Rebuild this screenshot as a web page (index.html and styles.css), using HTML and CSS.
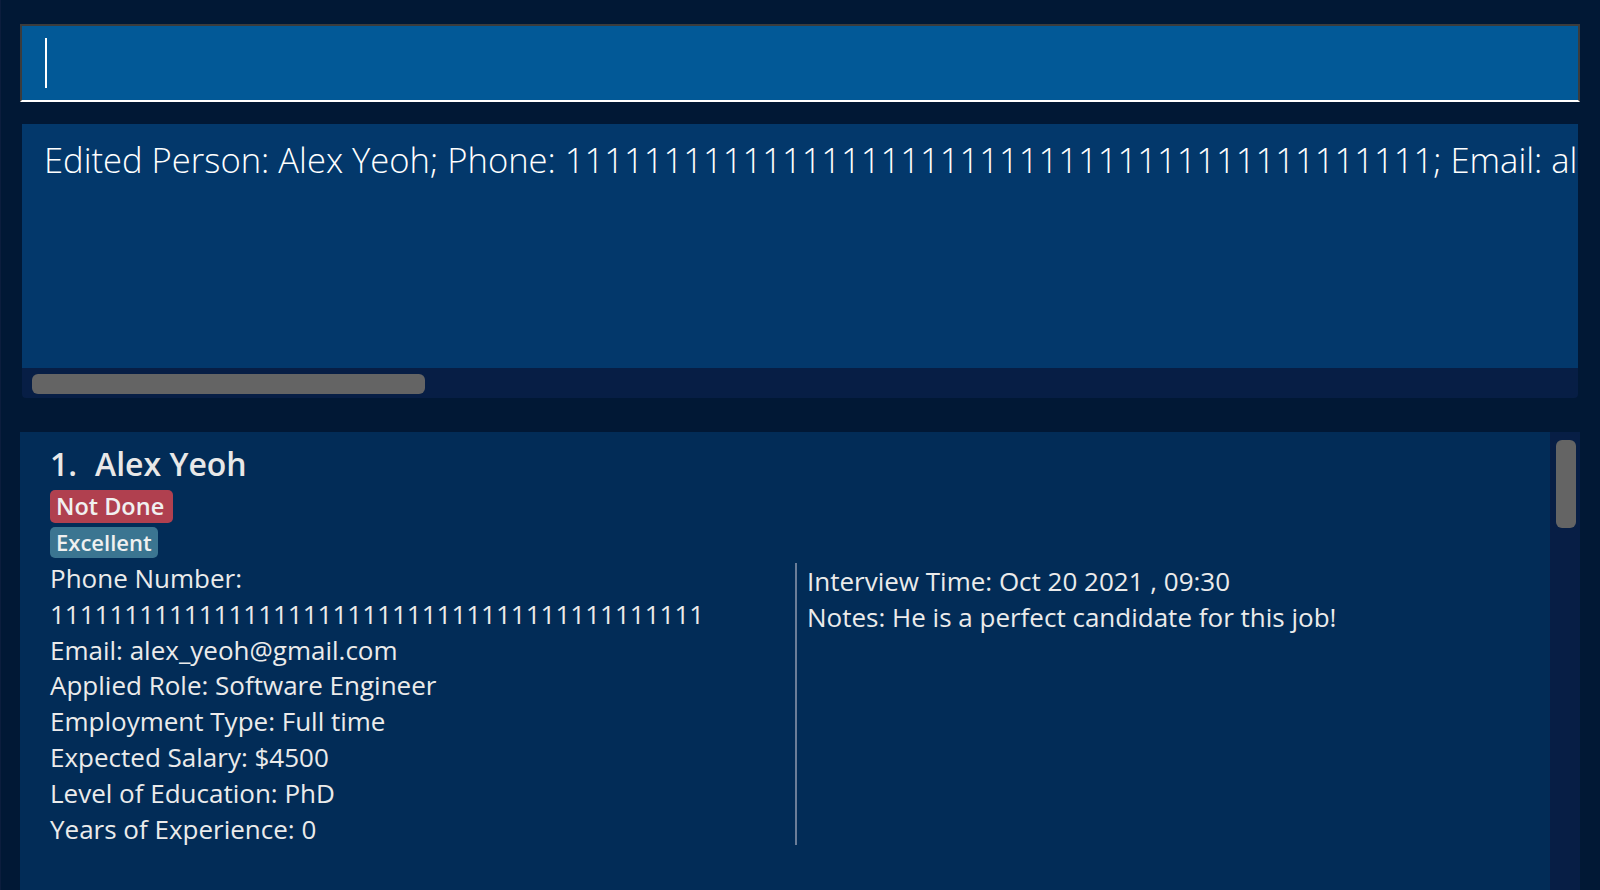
FILE: index.html
```html
<!DOCTYPE html>
<html lang="en">
<head>
<meta charset="utf-8">
<title>Address Book</title>
<link rel="stylesheet" href="styles.css">
</head>
<body>
<div class="app">
  <div class="command">
    <span class="caret"></span>
  </div>
  <div class="result">
    <div class="result-text">Edited Person: Alex Yeoh; Phone: 11111111111111111111111111111111111111111111; Email: alex_yeoh@gmail.com; Applied Role: Software Engineer; Employment Type: Full time</div>
    <div class="hscroll"><div class="hthumb"></div></div>
  </div>
  <div class="list">
    <div class="card">
      <div class="title"><span class="idx">1.</span><span class="name">Alex Yeoh</span></div>
      <div class="tags">
        <span class="tag tag-red">Not Done</span>
        <span class="tag tag-teal">Excellent</span>
      </div>
      <div class="details">
        <div class="col-left">
          <div class="line">Phone Number: 11111111111111111111111111111111111111111111</div>
          <div class="line">Email: alex_yeoh@gmail.com</div>
          <div class="line">Applied Role: Software Engineer</div>
          <div class="line">Employment Type: Full time</div>
          <div class="line">Expected Salary: $4500</div>
          <div class="line">Level of Education: PhD</div>
          <div class="line">Years of Experience: 0</div>
        </div>
        <div class="divider"></div>
        <div class="col-right">
          <div class="line">Interview Time: Oct 20 2021 , 09:30</div>
          <div class="line">Notes: He is a perfect candidate for this job!</div>
        </div>
      </div>
    </div>
    <div class="vscroll"><div class="vthumb"></div></div>
  </div>
</div>
</body>
</html>
```

FILE: styles.css
```css
html, body {
  margin: 0;
  padding: 0;
  background: #011835;
}

body {
  width: 1600px;
  height: 890px;
  overflow: hidden;
  font-family: "Open Sans", "Noto Sans", sans-serif;
}

.app {
  box-sizing: border-box;
  height: 890px;
  padding: 24px 20px 0 19px;
  border-left: 1px solid #0c1d3d;
  display: flex;
  flex-direction: column;
}

.command {
  box-sizing: border-box;
  height: 78px;
  background: #025997;
  border: 2px solid #3c3c3c;
  border-bottom: 2px solid #ffffff;
  padding: 12px 0 0 23px;
  flex: none;
}

.caret {
  display: block;
  width: 2px;
  height: 50px;
  background: #ffffff;
}

.result {
  margin: 22px 2px 0;
  flex: none;
}

.result-text {
  box-sizing: border-box;
  height: 244px;
  background: #03386b;
  color: #ffffff;
  font-size: 34.6px;
  font-weight: 300;
  line-height: 46px;
  padding: 13px 0 0 22px;
  white-space: nowrap;
  overflow: hidden;
}

.hscroll {
  box-sizing: border-box;
  height: 30px;
  background: #071e45;
  padding: 6px 10px 4px;
  border-radius: 0 0 4px 4px;
}

.hthumb {
  width: 393px;
  height: 20px;
  background: #646464;
  border-radius: 6px;
}

.list {
  margin-top: 34px;
  flex: 1;
  min-height: 0;
  display: flex;
}

.card {
  flex: 1;
  background: #022c57;
  padding: 12px 30px 0;
  color: #ebebeb;
}

.title {
  display: flex;
  font-size: 32px;
  font-weight: 600;
  line-height: 40px;
  color: #e8e8e8;
}

.idx {
  width: 45px;
}

.tags {
  display: flex;
  flex-direction: column;
  align-items: flex-start;
  gap: 4px;
  margin-top: 6px;
}

.tag {
  box-sizing: border-box;
  height: 32px;
  line-height: 32px;
  font-size: 22px;
  font-weight: 600;
  padding: 0 7px;
  border-radius: 5px;
  color: #f0f0f0;
}

.tag-red {
  background: #b0404f;
  height: 33px;
  line-height: 33px;
  font-size: 23.5px;
  padding: 0 7px 0 6px;
  min-width: 123px;
}

.tag-teal {
  background: #3b7591;
  height: 31px;
  line-height: 31px;
  padding: 0 6px;
}

.details {
  display: grid;
  grid-template-columns: 735px 2px 1fr;
  column-gap: 10px;
  margin-top: 3px;
  font-size: 26px;
  line-height: 35.8px;
}

.divider {
  background: #6b7d98;
  margin: 2px 0;
}

.col-right {
  padding-top: 3px;
}

.vscroll {
  box-sizing: border-box;
  width: 30px;
  background: #071e45;
  padding: 8px 4px 0 6px;
  flex: none;
}

.vthumb {
  height: 88px;
  background: #646464;
  border-radius: 6px;
}
```
